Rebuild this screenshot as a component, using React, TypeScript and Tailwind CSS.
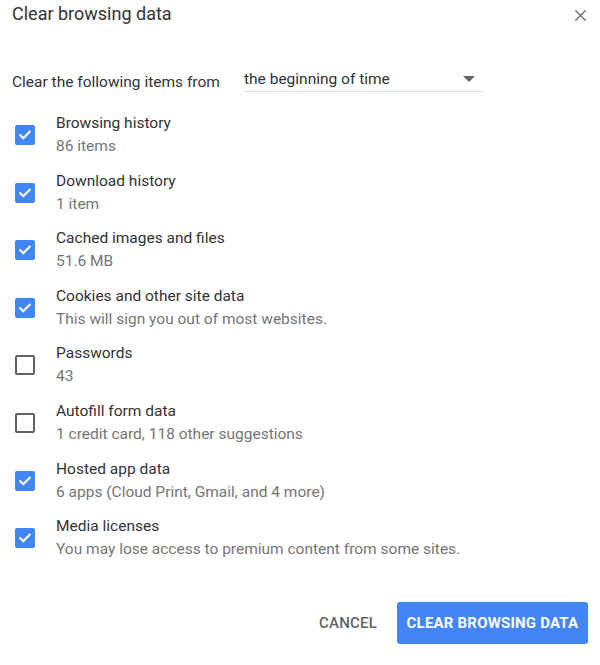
import { X } from 'lucide-react';

const ITEMS = [
    { title: 'Browsing history', sub: '86 items', checked: true },
    { title: 'Download history', sub: '1 item', checked: true },
    { title: 'Cached images and files', sub: '51.6 MB', checked: true },
    { title: 'Cookies and other site data', sub: 'This will sign you out of most websites.', checked: true },
    { title: 'Passwords', sub: '43', checked: false },
    { title: 'Autofill form data', sub: '1 credit card, 118 other suggestions', checked: false },
    { title: 'Hosted app data', sub: '6 apps (Cloud Print, Gmail, and 4 more)', checked: true },
    { title: 'Media licenses', sub: 'You may lose access to premium content from some sites.', checked: true },
];

const Checkbox = ({ checked }: { checked: boolean }) =>
    checked ? (
        <div className="w-[20px] h-[20px] rounded-[2px] bg-[#4285f4] flex items-center justify-center">
            <svg width="14" height="14" viewBox="0 0 24 24" fill="none" stroke="white" strokeWidth="3.6" strokeLinecap="square">
                <path d="M4 12.5l5 5L20 6.5" />
            </svg>
        </div>
    ) : (
        <div className="w-[20px] h-[20px] rounded-[2px] border-[2.5px] border-[#5f6368]" />
    );

export default function App() {
    return (
        <div className="w-[600px] h-[665px] bg-white font-['Roboto',sans-serif] text-[#333] relative">
            {/* Header */}
            <div className="flex items-start justify-between pl-[12px] pr-[10px] pt-[2px]">
                <h1 className="text-[18px] leading-[24px] text-[#333]">Clear browsing data</h1>
                <button className="mt-[4px] text-[#6e6e6e]">
                    <X size={19} strokeWidth={1.7} />
                </button>
            </div>

            {/* Time range */}
            <div className="flex items-start mt-[43px] pl-[12px]">
                <span className="text-[15.5px] leading-[24px] w-[232px] mt-[1px]">Clear the following items from</span>
                <div className="w-[239px] h-[23px] border-b border-[#e0e0e0] flex items-start justify-between pr-[8px]">
                    <span className="text-[15.5px] leading-[20px]">the beginning of time</span>
                    <svg width="12" height="6" viewBox="0 0 12 6" className="mt-[7px]">
                        <path d="M0 0h12L6 6z" fill="#666" />
                    </svg>
                </div>
            </div>

            {/* Items */}
            <div className="flex flex-col gap-[11.6px] mt-[18px]">
                {ITEMS.map(item => (
                    <div key={item.title} className="flex items-center">
                        <div className="w-[56px] pl-[15px]">
                            <Checkbox checked={item.checked} />
                        </div>
                        <div className="flex flex-col">
                            <span className="text-[15.5px] leading-[23px] text-[#333]">{item.title}</span>
                            <span className="text-[15.5px] leading-[23px] text-[#757575]">{item.sub}</span>
                        </div>
                    </div>
                ))}
            </div>

            {/* Footer */}
            <div className="absolute bottom-[21px] right-[12px] flex items-center gap-[20px]">
                <button className="text-[15px] font-medium text-[#5f6368] tracking-[0.2px]">CANCEL</button>
                <button className="h-[42px] w-[191px] rounded-[3px] bg-[#4285f4] text-white text-[15px] font-bold tracking-[0.2px]">
                    CLEAR BROWSING DATA
                </button>
            </div>
        </div>
    );
}
